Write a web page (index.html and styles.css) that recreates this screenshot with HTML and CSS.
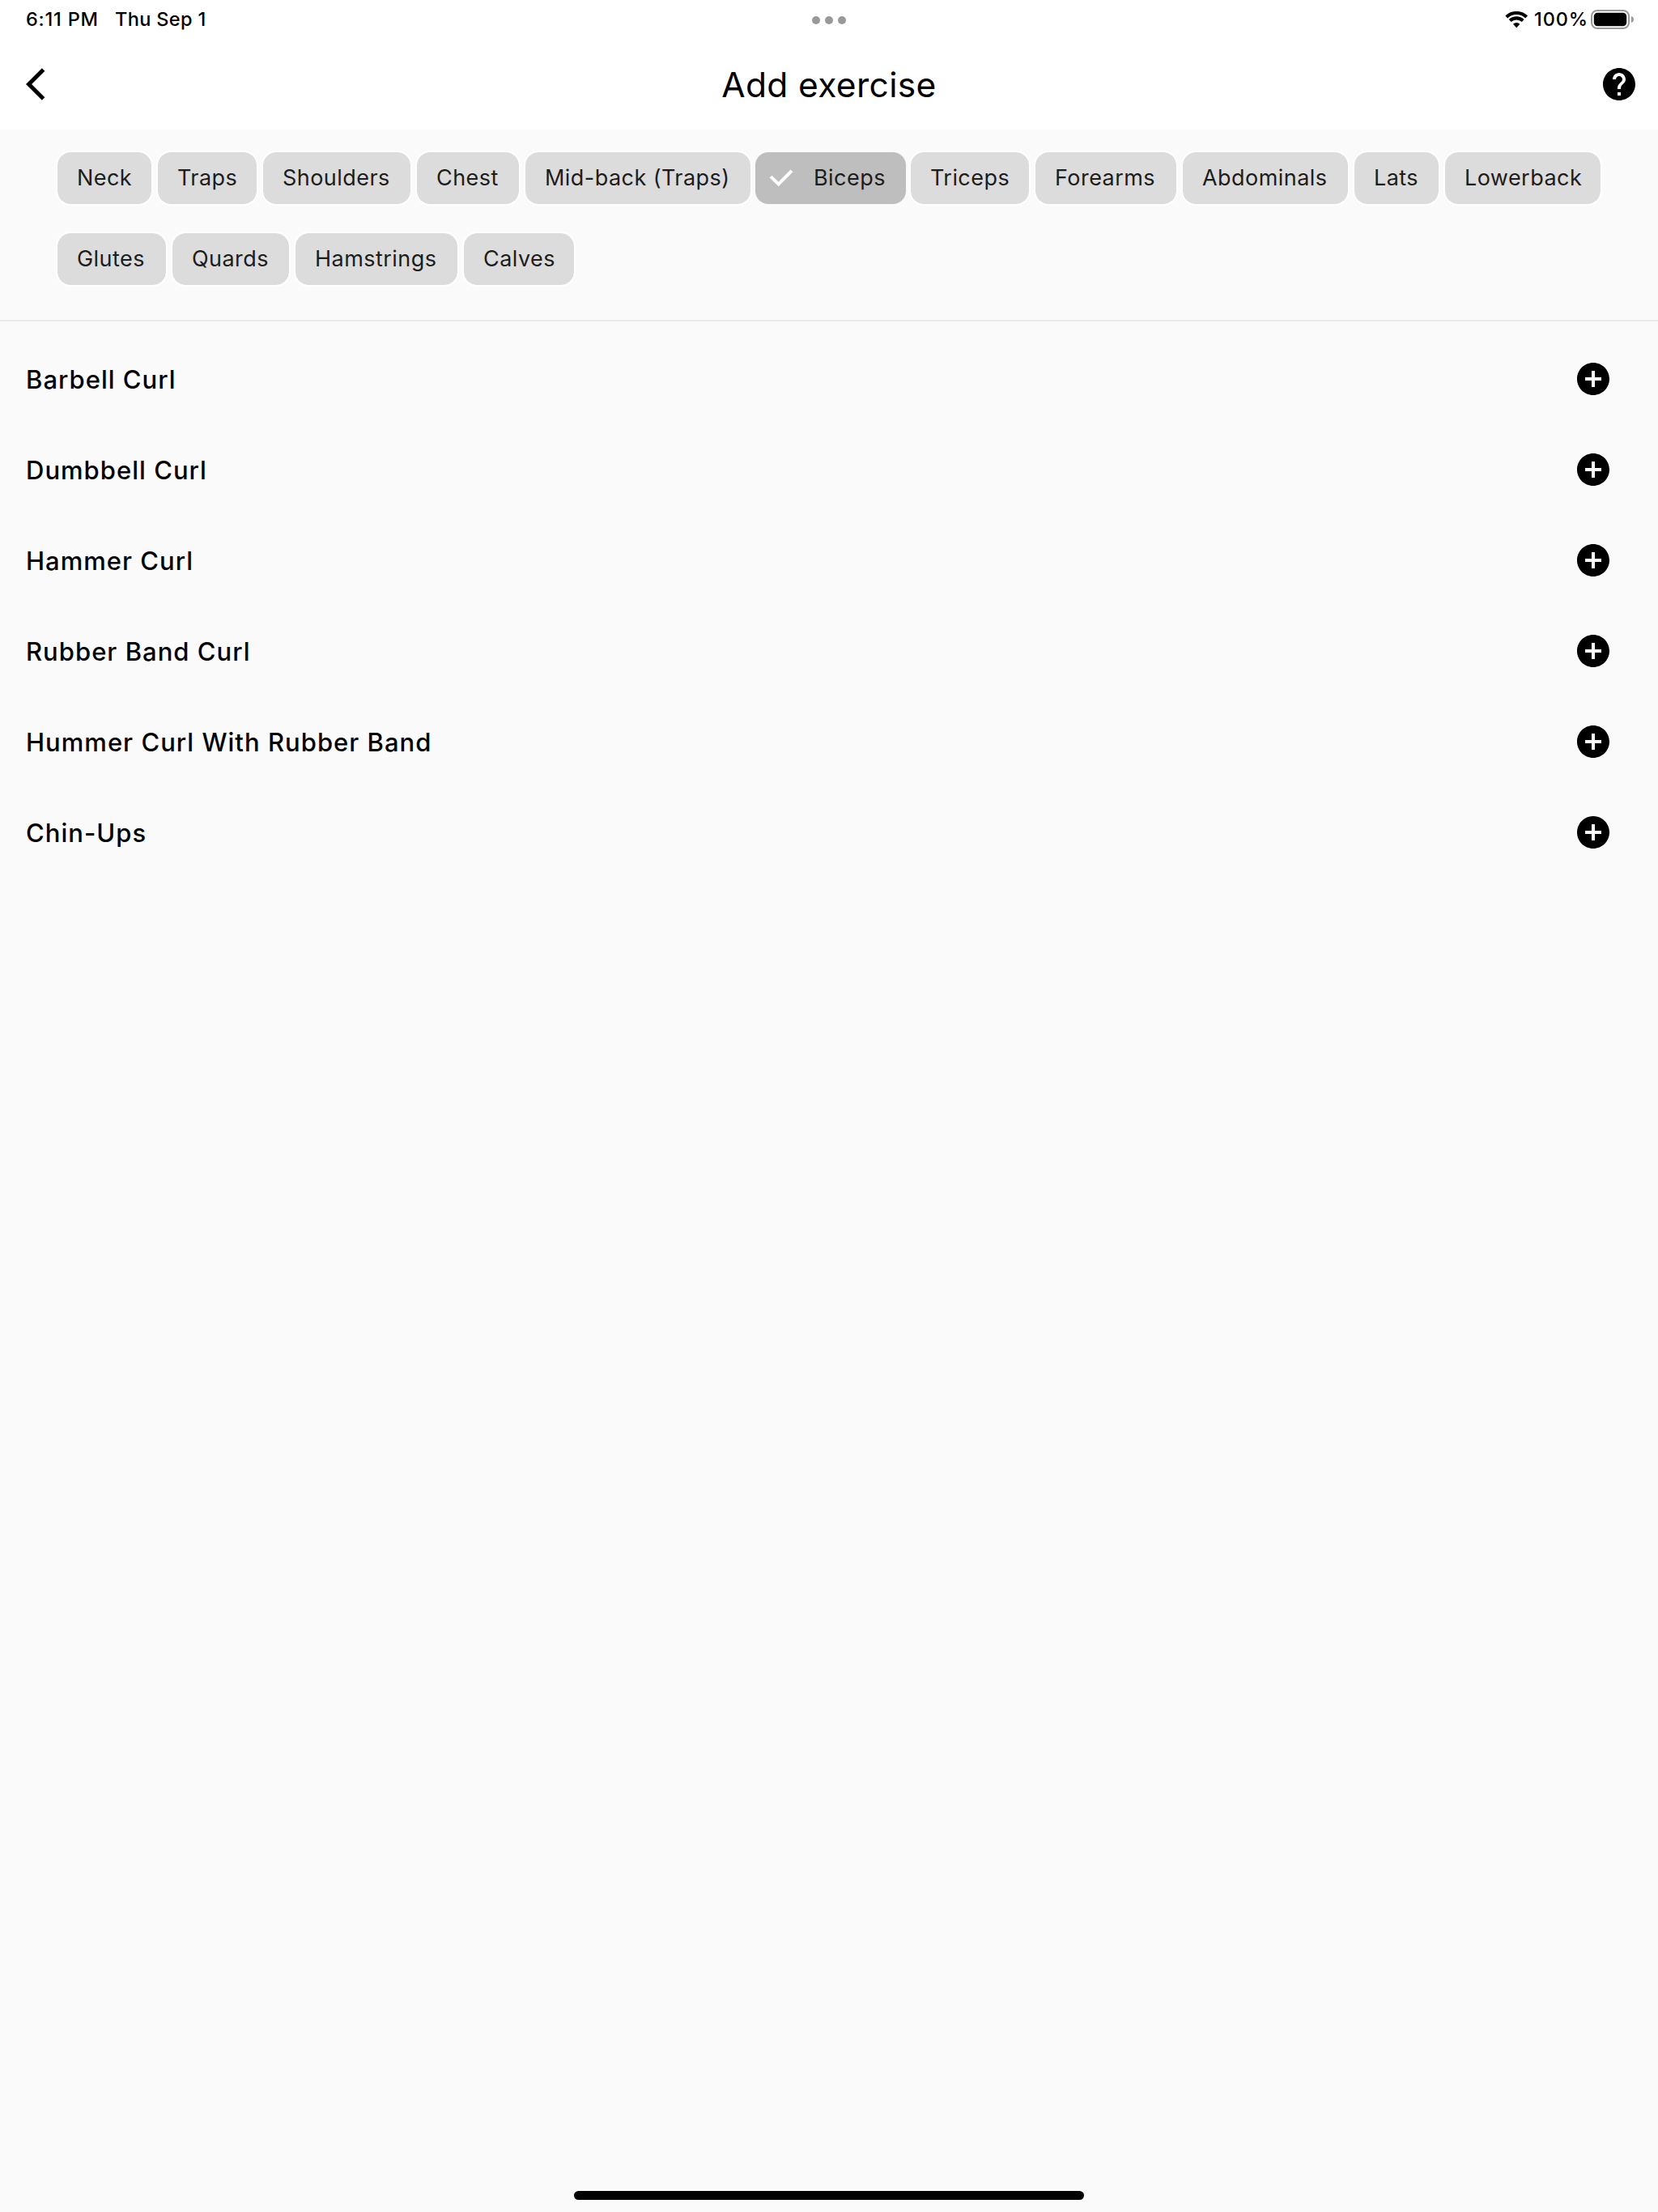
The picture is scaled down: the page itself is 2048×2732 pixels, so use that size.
FILE: index.html
```html
<!DOCTYPE html>
<html lang="en">
<head>
<meta charset="utf-8">
<title>Add exercise</title>
<link rel="stylesheet" href="styles.css">
</head>
<body>
<svg class="defs" aria-hidden="true">
  <symbol id="add-circle" viewBox="0 0 24 24"><path d="M12 2C6.48 2 2 6.48 2 12s4.48 10 10 10 10-4.48 10-10S17.52 2 12 2zm5 11h-4v4h-2v-4H7v-2h4V7h2v4h4v2z"/></symbol>
</svg>
<div class="screen">
  <div class="status">
    <div class="status-side">
      <span class="time">6:11 PM</span>
      <span class="date">Thu Sep 1</span>
    </div>
    <div class="dots"><i></i><i></i><i></i></div>
    <div class="status-side status-right">
      <svg class="wifi" width="28" height="21" viewBox="0 0 28 21">
        <path class="arc" d="M1.8 6.95A18 18 0 0 1 26.6 6.95"/>
        <path class="arc" d="M6.2 11.6A11.6 11.6 0 0 1 22.2 11.6"/>
        <path d="M14.2 20.2L10 15.8A6 6 0 0 1 18.4 15.8Z"/>
      </svg>
      <span class="percent">100%</span>
      <svg class="battery" width="54" height="24" viewBox="0 0 54 24">
        <rect class="shell" x="1" y="1" width="46" height="22" rx="7"/>
        <rect x="3.8" y="3.8" width="40.4" height="16.4" rx="4.4"/>
        <path class="nub" d="M50 8Q53 9.2 53 12Q53 14.8 50 16Z"/>
      </svg>
    </div>
  </div>

  <header class="appbar">
    <svg class="back" width="48" height="48" viewBox="0 0 24 24"><path d="M11.67 3.87L9.9 2.1 0 12l9.9 9.9 1.77-1.77L3.54 12z"/></svg>
    <h1>Add exercise</h1>
    <svg class="help" width="48" height="48" viewBox="0 0 24 24"><path d="M12 2C6.48 2 2 6.48 2 12s4.48 10 10 10 10-4.48 10-10S17.52 2 12 2zm1 17h-2v-2h2v2zm2.07-7.75l-.9.92C13.45 12.9 13 13.5 13 15h-2v-.5c0-1.1.45-2.1 1.17-2.83l1.24-1.26c.37-.36.59-.86.59-1.41 0-1.1-.9-2-2-2s-2 .9-2 2H8c0-2.21 1.79-4 4-4s4 1.79 4 4c0 .88-.36 1.68-.93 2.25z"/></svg>
  </header>

  <section class="filters">
    <span class="chip neck">Neck</span>
    <span class="chip traps">Traps</span>
    <span class="chip shoulders">Shoulders</span>
    <span class="chip chest">Chest</span>
    <span class="chip midback">Mid-back (Traps)</span>
    <span class="chip selected"><svg width="30" height="24" viewBox="0 0 30 24"><path d="M2 10.1L11.7 19.5L28 2.8"/></svg>Biceps</span>
    <span class="chip triceps">Triceps</span>
    <span class="chip forearms">Forearms</span>
    <span class="chip abdominals">Abdominals</span>
    <span class="chip lats">Lats</span>
    <span class="chip lowerback">Lowerback</span>
    <span class="chip glutes">Glutes</span>
    <span class="chip quards">Quards</span>
    <span class="chip hamstrings">Hamstrings</span>
    <span class="chip calves">Calves</span>
  </section>

  <ul class="exercises">
    <li><span>Barbell Curl</span><svg width="48" height="48"><use href="#add-circle"/></svg></li>
    <li><span>Dumbbell Curl</span><svg width="48" height="48"><use href="#add-circle"/></svg></li>
    <li><span>Hammer Curl</span><svg width="48" height="48"><use href="#add-circle"/></svg></li>
    <li><span>Rubber Band Curl</span><svg width="48" height="48"><use href="#add-circle"/></svg></li>
    <li><span>Hummer Curl With Rubber Band</span><svg width="48" height="48"><use href="#add-circle"/></svg></li>
    <li><span>Chin-Ups</span><svg width="48" height="48"><use href="#add-circle"/></svg></li>
  </ul>

  <div class="home-indicator"></div>
</div>
</body>
</html>
```
FILE: styles.css
```css
* { box-sizing: border-box; }
body { margin: 0; background: #fafafa; color: #000; font-family: Inter, "Liberation Sans", sans-serif; }
svg { display: block; flex: none; }
.defs { display: none; }

.screen { width: 2048px; height: 2732px; display: flex; flex-direction: column; }

/* system status bar */
.status { height: 48px; padding: 0 29px 0 32px; background: #fff; display: grid; grid-template-columns: 960px 128px 1fr; font-size: 23.5px; font-weight: 500; line-height: 47px; white-space: nowrap; }
.status-side { display: flex; align-items: flex-start; }
.time { width: 110px; letter-spacing: .8px; }
.date { letter-spacing: .35px; }
.dots { display: flex; justify-content: center; gap: 6px; padding-top: 20px; margin-left: -64px; width: 192px; }
.dots i { width: 10px; height: 10px; border-radius: 50%; background: #999; }
.status-right { justify-content: flex-end; }
.wifi { margin: 14px 8px 0 0; }
.arc { fill: none; stroke: #000; stroke-width: 4.1; }
.percent { width: 70px; letter-spacing: .9px; }
.battery { margin-top: 12px; }
.shell { fill: none; stroke: #999; stroke-width: 2; }
.nub { fill: #999; }

/* title bar */
.appbar { height: 112px; padding: 0 24px 0 32px; background: #fff; display: grid; grid-template-columns: 56px 1fr 64px; align-items: center; justify-items: start; }
.appbar h1 { margin: 0; justify-self: center; font-size: 42.5px; font-weight: 400; line-height: 113px; height: 112px; letter-spacing: .35px; }
.help { justify-self: end; }

/* muscle group filter */
.filters { height: 237px; padding: 26px 60px 0 69px; display: flex; flex-wrap: wrap; align-content: flex-start; align-items: center; gap: 32px 4px; border-bottom: 2px solid #e9e9e9; }
.chip { height: 68px; border: 2px solid #fff; border-radius: 18px; background: #dcdcdc; background-clip: padding-box; color: #1d1d1d; font-size: 27px; font-weight: 400; line-height: 63px; letter-spacing: .45px; white-space: nowrap; padding-left: 24px; }
.selected { width: 186px; height: 64px; border: 0; border-radius: 16px; background: #bebebe; padding-left: 17px; display: flex; gap: 25px; }
.selected svg { margin-top: 20px; fill: none; stroke: #fff; stroke-width: 4; }
.neck { width: 120px; }
.traps { width: 126px; }
.shoulders { width: 186px; }
.chest { width: 130px; }
.midback { width: 282px; }
.triceps { width: 150px; }
.forearms { width: 178px; }
.abdominals { width: 208px; }
.lats { width: 108px; }
.lowerback { width: 196px; }
.glutes { width: 138px; }
.quards { width: 148px; }
.hamstrings { width: 204px; }
.calves { width: 140px; }

/* exercise list */
.exercises { list-style: none; margin: 0; padding: 15px 56px 0 32px; flex: 1; }
.exercises li { height: 112px; display: flex; justify-content: space-between; align-items: center; font-size: 31px; font-weight: 500; letter-spacing: 1.02px; line-height: 113px; }

.home-indicator { width: 630px; height: 11px; margin: 0 auto 15px; border-radius: 6px; background: #000; }
```
